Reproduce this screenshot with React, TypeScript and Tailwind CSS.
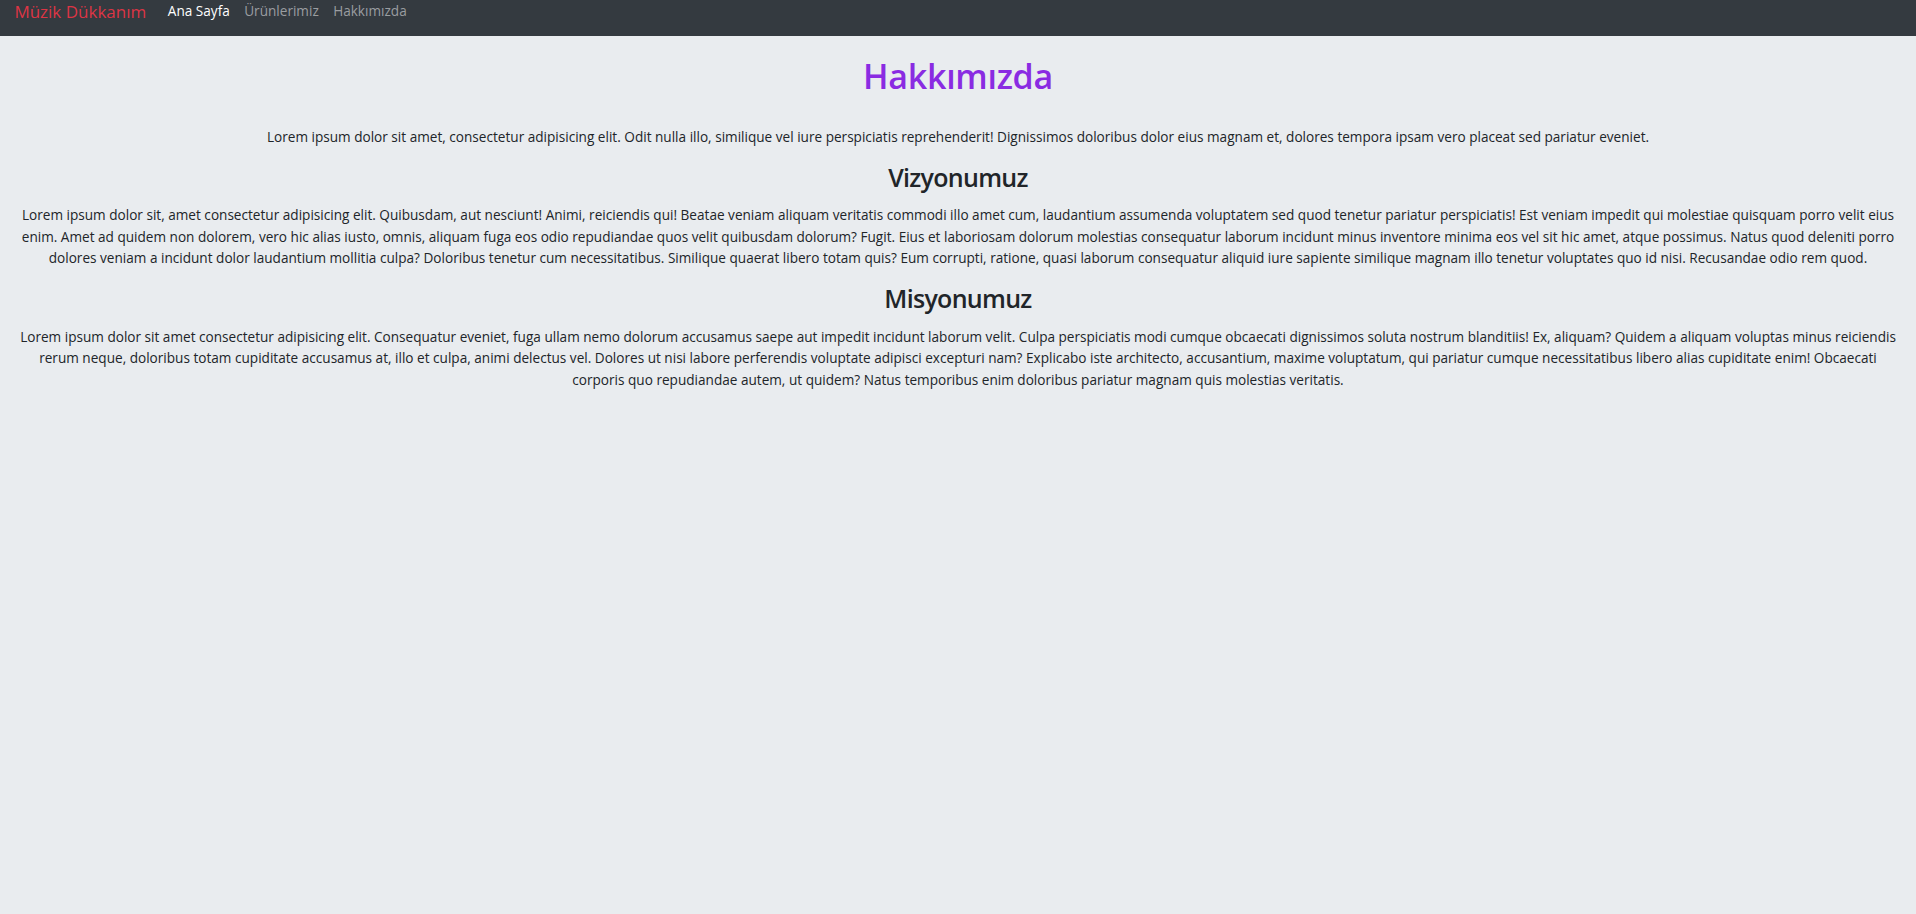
import React from "react";

export default function App() {
  const font = { fontFamily: '"Open Sans", "Noto Sans", sans-serif' };
  return (
    <div className="min-h-[914px] bg-[#e9ecef] text-[#212529]" style={font}>
      <nav className="h-[36px] bg-[#343a40] flex items-start px-[14.4px]">
        <a className="text-[17px] leading-[24px] text-[#dc3545] mr-[14.4px]">Müzik Dükkanım</a>
        <a className="text-[13.6px] leading-[22px] px-[7.2px] text-white">Ana Sayfa</a>
        <a className="text-[13.6px] leading-[22px] px-[7.2px] text-[#9a9da0]">Ürünlerimiz</a>
        <a className="text-[13.6px] leading-[22px] px-[7.2px] text-[#9a9da0]">Hakkımızda</a>
      </nav>
      <main className="px-[20px] text-center">
        <h1 className="mt-[19px] text-[34px] leading-[43px] font-semibold tracking-[-0.3px] text-[#8a2be2]">Hakkımızda</h1>
        <p className="mt-[28px] text-[13.6px] leading-[21.6px]">
          Lorem ipsum dolor sit amet, consectetur adipisicing elit. Odit nulla illo, similique vel iure perspiciatis reprehenderit! Dignissimos doloribus dolor eius magnam et, dolores tempora ipsam vero placeat sed pariatur eveniet.
        </p>
        <h2 className="mt-[12px] text-[25px] leading-[34.6px] font-semibold tracking-[-0.7px]">Vizyonumuz</h2>
        <p className="mt-[10px] text-[13.6px] leading-[21.6px]">
          Lorem ipsum dolor sit, amet consectetur adipisicing elit. Quibusdam, aut nesciunt! Animi, reiciendis qui! Beatae veniam aliquam veritatis commodi illo amet cum, laudantium assumenda voluptatem sed quod tenetur pariatur perspiciatis! Est veniam impedit qui molestiae quisquam porro velit eius enim. Amet ad quidem non dolorem, vero hic alias iusto, omnis, aliquam fuga eos odio repudiandae quos velit quibusdam dolorum? Fugit. Eius et laboriosam dolorum molestias consequatur laborum incidunt minus inventore minima eos vel sit hic amet, atque possimus. Natus quod deleniti porro dolores veniam a incidunt dolor laudantium mollitia culpa? Doloribus tenetur cum necessitatibus. Similique quaerat libero totam quis? Eum corrupti, ratione, quasi laborum consequatur aliquid iure sapiente similique magnam illo tenetur voluptates quo id nisi. Recusandae odio rem quod.
        </p>
        <h2 className="mt-[12px] text-[25px] leading-[34.6px] font-semibold tracking-[-0.7px]">Misyonumuz</h2>
        <p className="mt-[10px] text-[13.6px] leading-[21.6px]">
          Lorem ipsum dolor sit amet consectetur adipisicing elit. Consequatur eveniet, fuga ullam nemo dolorum accusamus saepe aut impedit incidunt laborum velit. Culpa perspiciatis modi cumque obcaecati dignissimos soluta nostrum blanditiis! Ex, aliquam? Quidem a aliquam voluptas minus reiciendis rerum neque, doloribus totam cupiditate accusamus at, illo et culpa, animi delectus vel. Dolores ut nisi labore perferendis voluptate adipisci excepturi nam? Explicabo iste architecto, accusantium, maxime voluptatum, qui pariatur cumque necessitatibus libero alias cupiditate enim! Obcaecati corporis quo repudiandae autem, ut quidem? Natus temporibus enim doloribus pariatur magnam quis molestias veritatis.
        </p>
      </main>
    </div>
  );
}
